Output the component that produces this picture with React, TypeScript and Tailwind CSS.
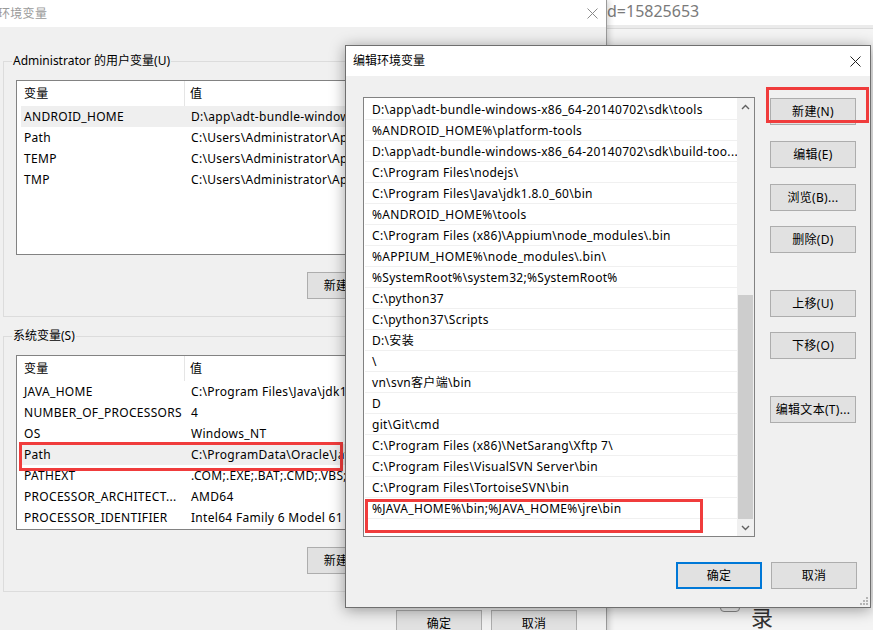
import React from "react";

const frontRows: string[] = [
  "D:\\app\\adt-bundle-windows-x86_64-20140702\\sdk\\tools",
  "%ANDROID_HOME%\\platform-tools",
  "D:\\app\\adt-bundle-windows-x86_64-20140702\\sdk\\build-too...",
  "C:\\Program Files\\nodejs\\",
  "C:\\Program Files\\Java\\jdk1.8.0_60\\bin",
  "%ANDROID_HOME%\\tools",
  "C:\\Program Files (x86)\\Appium\\node_modules\\.bin",
  "%APPIUM_HOME%\\node_modules\\.bin\\",
  "%SystemRoot%\\system32;%SystemRoot%",
  "C:\\python37",
  "C:\\python37\\Scripts",
  "D:\\安装",
  "\\",
  "vn\\svn客户端\\bin",
  "D",
  "git\\Git\\cmd",
  "C:\\Program Files (x86)\\NetSarang\\Xftp 7\\",
  "C:\\Program Files\\VisualSVN Server\\bin",
  "C:\\Program Files\\TortoiseSVN\\bin",
  "%JAVA_HOME%\\bin;%JAVA_HOME%\\jre\\bin",
];

const userVars: [string, string, boolean][] = [
  ["ANDROID_HOME", "D:\\app\\adt-bundle-windows-x86_64-20140702", true],
  ["Path", "C:\\Users\\Administrator\\AppData\\Local\\Microsoft\\WindowsApps;", false],
  ["TEMP", "C:\\Users\\Administrator\\AppData\\Local\\Temp", false],
  ["TMP", "C:\\Users\\Administrator\\AppData\\Local\\Temp", false],
];

const sysVars: [string, string, boolean][] = [
  ["JAVA_HOME", "C:\\Program Files\\Java\\jdk1.8.0_60", false],
  ["NUMBER_OF_PROCESSORS", "4", false],
  ["OS", "Windows_NT", false],
  ["Path", "C:\\ProgramData\\Oracle\\Java\\javapath;C:\\Windows\\system32", true],
  ["PATHEXT", ".COM;.EXE;.BAT;.CMD;.VBS;.VBE;.JS;.JSE;.WSF;.WSH;.MSC", false],
  ["PROCESSOR_ARCHITECT...", "AMD64", false],
  ["PROCESSOR_IDENTIFIER", "Intel64 Family 6 Model 61 Stepping 4, GenuineIntel", false],
];

function CloseX({ color }: { color: string }) {
  return (
    <svg width="11" height="11" viewBox="0 0 11 11">
      <path d="M0.5 0.5 L10.5 10.5 M10.5 0.5 L0.5 10.5" stroke={color} strokeWidth="1" fill="none" />
    </svg>
  );
}

function WinButton({ label, className = "" }: { label: string; className?: string }) {
  return (
    <div
      className={
        "w-[86px] h-[27px] shrink-0 bg-[#e1e1e1] border border-[#adadad] flex items-center justify-center leading-none " +
        className
      }
    >
      {label}
    </div>
  );
}

function VarList({ rows }: { rows: [string, string, boolean][] }) {
  return (
    <div className="w-[570px] h-[175px] bg-white border border-[#828282] flex flex-col overflow-hidden">
      <div className="h-[25px] shrink-0 flex pl-[4px]">
        <div className="w-[164px] pl-[3px] border-r border-[#e5e5e5] flex items-center">变量</div>
        <div className="pl-[5px] flex items-center">值</div>
      </div>
      <div className="flex flex-col pl-[4px]">
        {rows.map(([k, v, sel], i) => (
          <div key={i} className={"h-[21px] flex items-center " + (sel ? "bg-[#efefef]" : "")}>
            <div className="w-[164px] pl-[3px] whitespace-nowrap overflow-hidden">{k}</div>
            <div className="pl-[6px] whitespace-nowrap">{v}</div>
          </div>
        ))}
      </div>
    </div>
  );
}

function GroupBox({ label, rows, className = "" }: { label: string; rows: [string, string, boolean][]; className?: string }) {
  return (
    <div className={"relative ml-[3px] w-[600px] h-[256px] border border-[#dcdcdc] pt-[18px] pl-[12px] flex flex-col " + className}>
      <div className="absolute -top-[9px] left-[8px] px-px bg-[#f0f0f0] leading-[16px] whitespace-nowrap tracking-normal">{label}</div>
      <VarList rows={rows} />
      <WinButton label="新建(N)..." className="mt-[17px] ml-[291px]" />
    </div>
  );
}

function BackWindow() {
  return (
    <div className="absolute left-0 top-0 w-[607px] h-[640px] bg-[#f0f0f0] border-r border-[#9a9a9a] shadow-[2px_0_6px_rgba(0,0,0,0.18)] flex flex-col overflow-hidden">
      <div className="h-[27px] shrink-0 bg-white flex items-center justify-between pr-[8px]">
        <span className="-ml-[2px] text-[#9a9a9a]">环境变量</span>
        <CloseX color="#8a8a8a" />
      </div>
      <GroupBox label="Administrator 的用户变量(U)" rows={userVars} className="mt-[34px]" />
      <GroupBox label="系统变量(S)" rows={sysVars} className="mt-[19px]" />
      <div className="flex gap-[9px] mt-[18px] ml-[396px]">
        <WinButton label="确定" />
        <WinButton label="取消" />
      </div>
    </div>
  );
}

function FrontDialog() {
  return (
    <div className="absolute left-[345px] top-[45px] w-[526px] h-[563px] bg-[#f0f0f0] border border-[#6f6f6f] shadow-[0_2px_14px_rgba(0,0,0,0.38)] flex flex-col">
      <div className="h-[30px] shrink-0 bg-white flex items-center justify-between pl-[7px] pr-[9px]">
        <span className="tracking-normal">编辑环境变量</span>
        <CloseX color="#222222" />
      </div>
      <div className="flex-1 flex flex-col pl-[17px] pt-[21px] relative">
        <div className="flex gap-[15px]">
          <div className="w-[392px] h-[440px] shrink-0 bg-white border border-[#828282] flex">
            <div className="flex-1 flex flex-col pt-px pl-px min-w-0">
              {frontRows.map((r, i) => (
                <div
                  key={i}
                  className="h-[21px] shrink-0 border-b border-[#f0f0f0] pl-[7px] pt-[2px] flex items-center whitespace-nowrap overflow-hidden"
                >
                  {r}
                </div>
              ))}
            </div>
            <div className="w-[17px] shrink-0 bg-[#f0f0f0] flex flex-col">
              <div className="h-[17px] flex items-center justify-center">
                <svg width="9" height="6" viewBox="0 0 9 6">
                  <path d="M1 5 L4.5 1.5 L8 5" stroke="#606060" strokeWidth="1.4" fill="none" />
                </svg>
              </div>
              <div className="flex-1 flex flex-col justify-end px-px">
                <div className="h-[224px] bg-[#cdcdcd]" />
              </div>
              <div className="h-[17px] flex items-center justify-center">
                <svg width="9" height="6" viewBox="0 0 9 6">
                  <path d="M1 1 L4.5 4.5 L8 1" stroke="#606060" strokeWidth="1.4" fill="none" />
                </svg>
              </div>
            </div>
          </div>
          <div className="flex flex-col pt-px">
            <WinButton label="新建(N)" />
            <WinButton label="编辑(E)" className="mt-[16px]" />
            <WinButton label="浏览(B)..." className="mt-[16px]" />
            <WinButton label="删除(D)" className="mt-[15px]" />
            <WinButton label="上移(U)" className="mt-[37px]" />
            <WinButton label="下移(O)" className="mt-[15px]" />
            <WinButton label="编辑文本(T)..." className="mt-[37px]" />
          </div>
        </div>
        <div className="flex justify-end gap-[9px] pr-[13px] mt-[25px]">
          <div className="w-[86px] h-[27px] bg-[#e1e1e1] border-2 border-[#0078d7] flex items-center justify-center leading-none">
            确定
          </div>
          <WinButton label="取消" />
        </div>
        <div className="absolute right-[2px] bottom-[2px] flex flex-col items-end gap-[1px]">
          <div className="flex gap-[1px]"><div className="w-[2px] h-[2px] bg-[#b5b5b5]" /></div>
          <div className="flex gap-[1px]"><div className="w-[2px] h-[2px] bg-[#b5b5b5]" /><div className="w-[2px] h-[2px] bg-[#b5b5b5]" /></div>
          <div className="flex gap-[1px]"><div className="w-[2px] h-[2px] bg-[#b5b5b5]" /><div className="w-[2px] h-[2px] bg-[#b5b5b5]" /><div className="w-[2px] h-[2px] bg-[#b5b5b5]" /></div>
        </div>
      </div>
    </div>
  );
}

export default function App() {
  return (
    <div className="relative w-[873px] h-[630px] overflow-hidden bg-[#f2f2f2] text-[12px] tracking-[0.3px] text-black font-['Noto_Sans','Noto_Sans_CJK_SC',sans-serif]">
      {/* background web page */}
      <div className="absolute inset-0 flex flex-col">
        <div className="h-[25px] shrink-0 bg-white flex items-center pb-[3px] pl-[607px] text-[16px] tracking-normal text-[#7a7a7a]">d=15825653</div>
        <div className="h-[4px] shrink-0 bg-[#ebebeb] border-b border-[#d9d9d9]" />
        <div className="flex-1 bg-[#f4f4f4]" />
      </div>
      <div className="absolute left-[720px] top-[590px] w-[20px] h-[22px] border border-[#8a8a8a] rounded-[4px]" />
      <div className="absolute left-[751px] top-[602px] text-[22px] leading-[30px] text-[#333]">录</div>

      <BackWindow />
      <div className="absolute left-[19px] top-[442px] w-[324px] h-[29px] border-[3px] border-[#f03c3c]" />

      <FrontDialog />
      <div className="absolute left-[766px] top-[87px] w-[103px] h-[36px] border-[3px] border-[#f03c3c]" />
      <div className="absolute left-[365px] top-[499px] w-[338px] h-[34px] border-[3px] border-[#f03c3c]" />
    </div>
  );
}
